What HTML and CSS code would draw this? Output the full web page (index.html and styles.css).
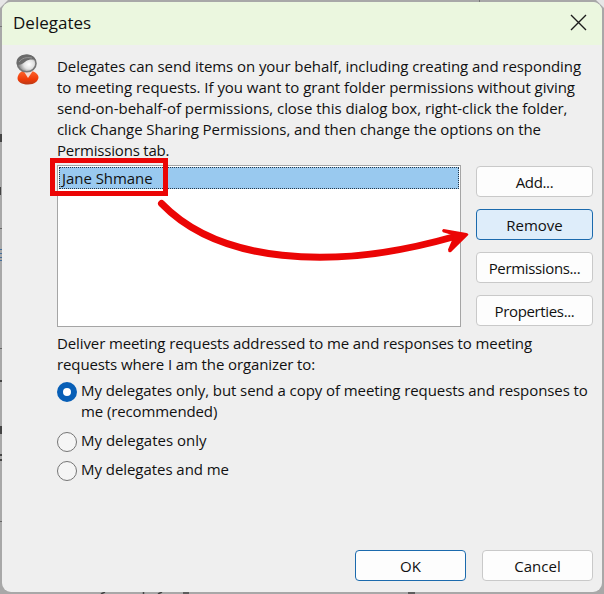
FILE: index.html
```
<!DOCTYPE html>
<html lang="en">
<head>
<meta charset="utf-8">
<title>Delegates</title>
<link rel="stylesheet" href="styles.css">
</head>
<body>
<svg class="backdrop" width="604" height="594" aria-hidden="true">
  <path d="M0 0h8L0 8zM604 0h-8l8 8z" fill="#e6e6e6"/>
  <path d="M479.500 0v2M0 26.500h2" stroke="#777"/>
  <path d="M0 134h2v8H0zM0 187h1v8H0zM0 380h2v2H0zM0 426h2v8H0zM0 454h2v2H0zM0 459h2v2H0z" fill="#444"/>
  <path d="M0 228.500h2M0 348.500h2M0 521.500h2" stroke="#666"/>
  <path d="M0 249.500h2M0 253.500h2M0 257.500h2M0 260.500h2" stroke="#456f9c"/>
  <path d="M101 594l4-2M143.500 592v2M158 594l4-2M183 593h6M408 593h7" stroke="#444" stroke-width="1.500"/>
</svg>
<main class="dialog">
  <header class="titlebar">
    <h1>Delegates</h1>
    <svg class="close" width="17" height="17" viewBox="0 0 17 17"><path d="M1 1l15 15M16 1L1 16" stroke="#1c1c1c" stroke-width="1.400" fill="none"/></svg>
  </header>
  <section class="content">
    <svg class="person" width="26" height="34" viewBox="0 0 26 34">
      <defs>
        <linearGradient id="shirt" x1="0" y1="0" x2="0" y2="1"><stop offset="0" stop-color="#ff6a32"/><stop offset=".65" stop-color="#ef3b08"/><stop offset="1" stop-color="#b83a18"/></linearGradient>
        <radialGradient id="face" cx=".62" cy=".55" r=".55"><stop offset="0" stop-color="#fff"/><stop offset=".5" stop-color="#e2e2e2"/><stop offset="1" stop-color="#858585"/></radialGradient>
      </defs>
      <path d="M2.500 25C3 20 7 17 12 17s11 3 11.500 7c0 4-4 7.500-10.500 7.500S2.500 29 2.500 25z" fill="url(#shirt)"/>
      <path d="M8 17l5 8 5.500-8z" fill="#f4dcd5"/>
      <ellipse cx="11.700" cy="10.500" rx="9.300" ry="8.300" fill="url(#face)" stroke="#777" stroke-width="1.600"/>
      <path d="M2 12C0 6 5 1.500 11 1.500c5 0 9 2 9.500 5.500-4-1-7-.5-10 1.500C8 11 5 12 2 12z" fill="#6b6b6b"/>
      <path d="M4 9c3-4 7-5 13-4" stroke="#979797" fill="none"/>
    </svg>
    <div class="copy">
      <p><span class="a1">Delegates can send items on your behalf, including creating and responding</span><span class="a2">to meeting requests. If you want to grant folder permissions without giving</span><span class="a3">send-on-behalf-of permissions, close this dialog box, right-click the folder,</span><span class="a4">click Change Sharing Permissions, and then change the options on the</span><span class="a5">Permissions tab.</span></p>
      <div class="manage">
        <div class="list"><div class="selected"><span class="n1">Jane Shmane</span></div></div>
        <div class="actions">
          <button><span class="b1">Add...</span></button>
          <button class="hot"><span class="b2">Remove</span></button>
          <button><span class="b3">Permissions...</span></button>
          <button><span class="b4">Properties...</span></button>
        </div>
      </div>
      <p class="deliver"><span class="d1">Deliver meeting requests addressed to me and responses to meeting</span><span class="d2">requests where I am the organizer to:</span></p>
      <div class="options">
        <label><input type="radio" name="delivery" checked><span class="option"><span class="r1">My delegates only, but send a copy of meeting requests and responses to</span><span class="r2">me (recommended)</span></span></label>
        <label><input type="radio" name="delivery"><span class="option"><span class="r3">My delegates only</span></span></label>
        <label><input type="radio" name="delivery"><span class="option"><span class="r4">My delegates and me</span></span></label>
      </div>
    </div>
  </section>
  <footer><button class="default"><span>OK</span></button><button><span class="b5">Cancel</span></button></footer>
</main>
<svg class="annotation" width="604" height="594" aria-hidden="true">
  <rect x="52.500" y="160.500" width="113" height="33" fill="none" stroke="#eb0505" stroke-width="5"/>
  <path d="M161.500 203.500C218 262 330 272 453 237" fill="none" stroke="#eb0505" stroke-width="7" stroke-linecap="round"/>
  <path d="M443.500 229Q441 230.500 443 232.200L454 235.500 448 249.500Q448 253 451 252L468.500 234.800Q468 233 465 232.800Z" fill="#eb0505"/>
</svg>
</body>
</html>
```
FILE: styles.css
```
* { box-sizing: border-box; }
body {
  margin: 0;
  width: 604px;
  height: 594px;
  padding: 2px;
  overflow: hidden;
  background: #a8a8a8;
  color: #111;
  font: 15px/21px "Open Sans", "Noto Sans", sans-serif;
}
.backdrop, .annotation { position: absolute; inset: 0; pointer-events: none; }
.dialog {
  position: relative;
  display: flex;
  flex-direction: column;
  width: 600px;
  height: 590px;
  border-radius: 9px;
  overflow: hidden;
  background: #efefef;
}
.titlebar {
  display: flex;
  align-items: center;
  justify-content: space-between;
  height: 43px;
  padding: 0 15px 0 11px;
  background: #ebf7df;
}
h1 { position: relative; top: -1px; margin: 0; font-size: 17px; font-weight: 400; line-height: 22px; }
.close { position: relative; top: -1px; }
.content { display: flex; padding: 11px 9px 0 11px; }
.person { flex: none; margin: -3px 17px 0 2px; }
.copy { width: 537px; margin-left: -1px; }
p { margin: 0; }
span { white-space: nowrap; }
p > span, .option > span { display: block; width: max-content; }
.a1 { letter-spacing: -0.07px; }
.a2, .a3 { letter-spacing: -0.04px; }
.a4, .r1 { letter-spacing: -0.08px; }
.a5 { letter-spacing: -0.19px; }
.d1, .d2, .r2 { letter-spacing: -0.11px; }
.n1, .r4 { letter-spacing: -0.05px; }
.b1, .b3, .b4 { letter-spacing: -0.35px; }
.manage { display: flex; gap: 15px; margin-top: 4px; }
.list {
  width: 404px;
  height: 162px;
  padding: 1px;
  background: #fff;
  border: 1px solid #a5a5a5;
}
.selected { height: 22px; padding-left: 2px; line-height: 20px; background: #99c9ef; border: 1px dotted #26394b; }
.actions { display: flex; flex-direction: column; gap: 12px; padding-top: 1px; }
button {
  width: 117px;
  height: 31px;
  padding: 2px 0 0;
  border: 1px solid #c9c9c9;
  border-radius: 4px;
  background: #fdfdfd;
  color: #111;
  font: inherit;
}
.hot { background: #deedfa; border-color: #1b6aad; }
.deliver { margin-top: 6px; }
.options { display: flex; flex-direction: column; gap: 8px; margin-top: 5px; }
label { display: flex; gap: 4px; }
label:last-child { margin-top: -1px; }
input {
  appearance: none;
  flex: none;
  width: 20px;
  height: 20px;
  margin: 2px 0 0;
  border: 1px solid #757575;
  border-radius: 50%;
  background: #f5f5f5;
}
input:checked { border: 6px solid #075eb6; background: #fff; }
footer { display: flex; justify-content: flex-end; gap: 16px; margin: auto 9px 11px 0; }
footer button { width: 111px; }
.default { border-color: #1b6aad; }
```
